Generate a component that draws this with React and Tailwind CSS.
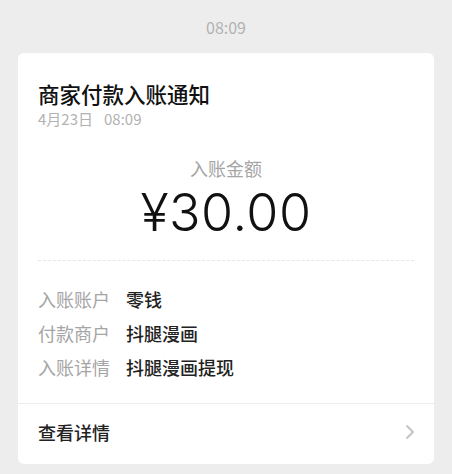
import React from 'react';

const rows = [
    { label: '入账账户', value: '零钱' },
    { label: '付款商户', value: '抖腿漫画' },
    { label: '入账详情', value: '抖腿漫画提现' },
];

const App = () => {
    return (
        <div className="min-h-[474px] bg-[#ededed] px-[18px] pt-[17px] font-['Noto_Sans_CJK_SC','Noto_Sans',sans-serif]">
            <div className="text-center text-[16px] leading-[20px] text-[#b2b2b2]">08:09</div>

            <div className="mt-4 bg-white rounded-[6px]">
                <div className="px-5 pt-[27px] pb-[19px]">
                    <h1 className="text-[21.5px] leading-[28px] font-medium text-[#111]">商家付款入账通知</h1>
                    <p className="mt-[1px] text-[15px] leading-[20px] text-[#b2b2b2]">
                        4月23日<span className="ml-[11px]">08:09</span>
                    </p>

                    <div className="mt-[27px] text-center text-[18px] leading-[24px] text-[#a5a5a5]">入账金额</div>
                    <div className="mt-[8px] text-center text-[52px] leading-[50px] font-light tracking-[0.5px] text-[#111] font-['Inter',sans-serif]">
                        ¥30.00
                    </div>

                    <div className="mt-[22px] border-t border-dashed border-[#e6e6e6]"></div>

                    <div className="mt-[21px]">
                        {rows.map((row) => (
                            <div key={row.label} className="flex gap-4 text-[18px] leading-[34px]">
                                <span className="text-[#a5a5a5]">{row.label}</span>
                                <span className="font-medium text-[#222]">{row.value}</span>
                            </div>
                        ))}
                    </div>
                </div>

                <div className="flex items-center justify-between border-t border-[#ececec] px-5 pb-[4px] h-[61px]">
                    <span className="text-[18px] font-medium text-[#222]">查看详情</span>
                    <svg width="10" height="16" viewBox="0 0 10 16" className="mr-[-1px]">
                        <path d="M2 2l6 6-6 6" fill="none" stroke="#c2c2c2" strokeWidth="1.8" strokeLinecap="round" strokeLinejoin="round" />
                    </svg>
                </div>
            </div>
        </div>
    );
};

export default App;
